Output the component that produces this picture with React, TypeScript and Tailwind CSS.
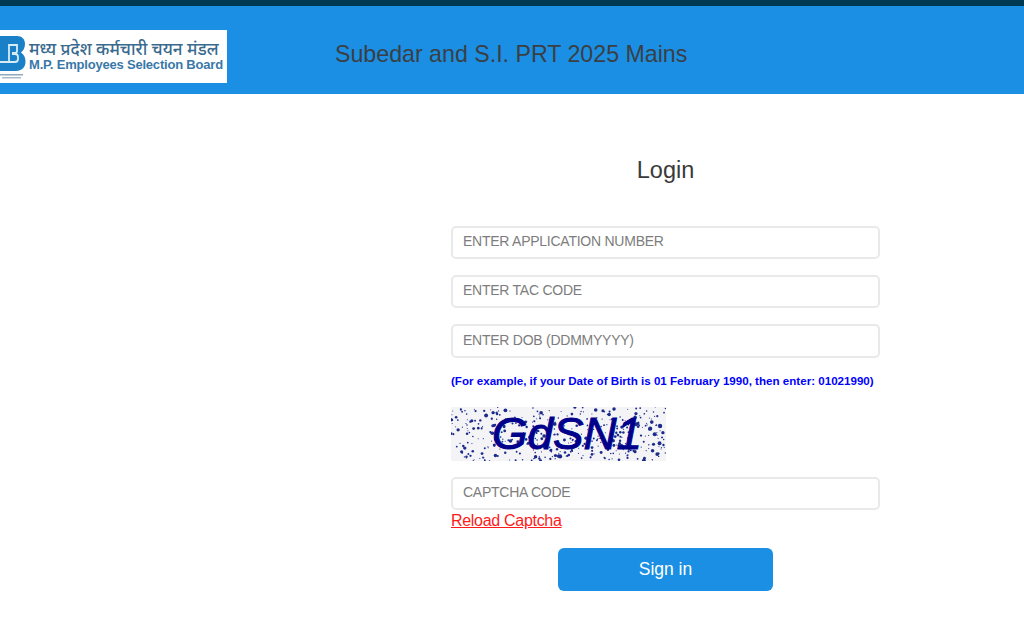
import React from "react";

const font = { fontFamily: '"Liberation Sans", Arial, sans-serif' };

// deterministic speckle for the captcha picture
const speckle = (() => {
  let seed = 17;
  const rnd = () => {
    seed = (seed * 16807) % 2147483647;
    return seed / 2147483647;
  };
  const dots: { x: number; y: number; r: number }[] = [];
  for (let i = 0; i < 420; i++) {
    dots.push({ x: rnd() * 215, y: rnd() * 54, r: 0.5 + rnd() * rnd() * 1.7 });
  }
  return dots;
})();

const Logo = () => (
  <div className="flex h-[53px] w-[227px] items-center bg-white">
    <svg width="26" height="53" viewBox="0 0 26 53" className="shrink-0">
      <path
        d="M0 6h17c5 0 8 3 8 8 0 4-2 7-4 8.500 3 2 4.500 5 4.500 9 0 6-4 9.500-9.500 9.500H0z"
        fill="#1a80c8"
      />
      <path d="M0 32h15c2 0 3-1 3-3v-2c0-2-1-3-3-3h-3M9 32V15h8v6c0 1-1 2-2 2h-3" fill="none" stroke="#d8ecf8" strokeWidth="1.800" />
      <rect x="0" y="44" width="23" height="1.500" fill="#8fa9bd" />
      <rect x="2" y="47" width="19" height="1.500" fill="#a9bccb" />
    </svg>
    <div className="ml-[3px] flex flex-col whitespace-nowrap">
      <span
        className="text-[17px] font-medium leading-[16px] text-[#3a6a8e]"
        style={{ fontFamily: '"Noto Sans", "Noto Sans Devanagari", "Liberation Sans", sans-serif' }}
      >
        मध्य प्रदेश कर्मचारी चयन मंडल
      </span>
      <span className="text-[13px] font-bold leading-[15px] tracking-[-0.2px] text-[#3a78a8]" style={font}>
        M.P. Employees Selection Board
      </span>
    </div>
  </div>
);

const Captcha = () => (
  <svg width="215" height="54" viewBox="0 0 215 54" className="block">
    <rect width="215" height="54" fill="#f4f4f6" />
    {speckle.map((d, i) => (
      <circle key={i} cx={d.x} cy={d.y} r={d.r} fill="#1c2a8c" />
    ))}
    <text
      x="41"
      y="42"
      fontSize="45"
      fontStyle="italic"
      fontFamily='"Liberation Sans", Arial, sans-serif'
      fill="#00008b"
      stroke="#00008b"
      strokeWidth="1"
      textLength="150"
      lengthAdjust="spacingAndGlyphs"
    >
      GdSN1
    </text>
  </svg>
);

const Field = ({ placeholder, className }: { placeholder: string; className: string }) => (
  <input
    placeholder={placeholder}
    style={font}
    className={`block w-full rounded-[5px] border-2 border-[#e9e9e9] bg-white pb-[3px] pl-[10px] pr-3 text-[14px] tracking-[-0.25px] text-[#555] outline-none placeholder:text-[#7d7d7d] ${className}`}
  />
);

export default function App() {
  return (
    <div className="h-[617px] w-[1024px] overflow-hidden bg-white" style={font}>
      <header className="border-t-[6px] border-[#003a52] bg-[#1a8fe3]">
        <div className="flex h-[88px] items-center">
          <div className="mt-[13px]">
            <Logo />
          </div>
          <h1 className="ml-[108px] mt-[-1px] pt-[10px] text-[23.2px] font-normal text-[#3a3f45]">
            Subedar and S.I. PRT 2025 Mains
          </h1>
        </div>
      </header>

      <main className="ml-[451px] w-[429px] pt-[62px]">
        <h2 className="text-center text-[23.5px] font-normal leading-[28px] text-[#3a3a3a]">Login</h2>
        <form className="mt-[42px] flex flex-col">
          <Field placeholder="ENTER APPLICATION NUMBER" className="h-[33px]" />
          <Field placeholder="ENTER TAC CODE" className="mt-[16px] h-[33px]" />
          <Field placeholder="ENTER DOB (DDMMYYYY)" className="mt-[16px] h-[34px]" />
          <p className="mt-[16px] whitespace-nowrap text-[11.6px] font-bold leading-[14px] text-[#0000ff]">
            (For example, if your Date of Birth is 01 February 1990, then enter: 01021990)
          </p>
          <div className="mt-[19px]">
            <Captcha />
          </div>
          <Field placeholder="CAPTCHA CODE" className="mt-[16px] h-[33px]" />
          <a href="#" className="mt-[1px] text-[16px] leading-[20px] tracking-[-0.3px] text-[#ff1a1a] underline">
            Reload Captcha
          </a>
          <button
            type="button"
            className="mx-auto mt-[17px] h-[43px] w-[215px] rounded-[6px] bg-[#1a8fe3] text-[17.5px] text-white"
          >
            Sign in
          </button>
        </form>
      </main>
    </div>
  );
}
